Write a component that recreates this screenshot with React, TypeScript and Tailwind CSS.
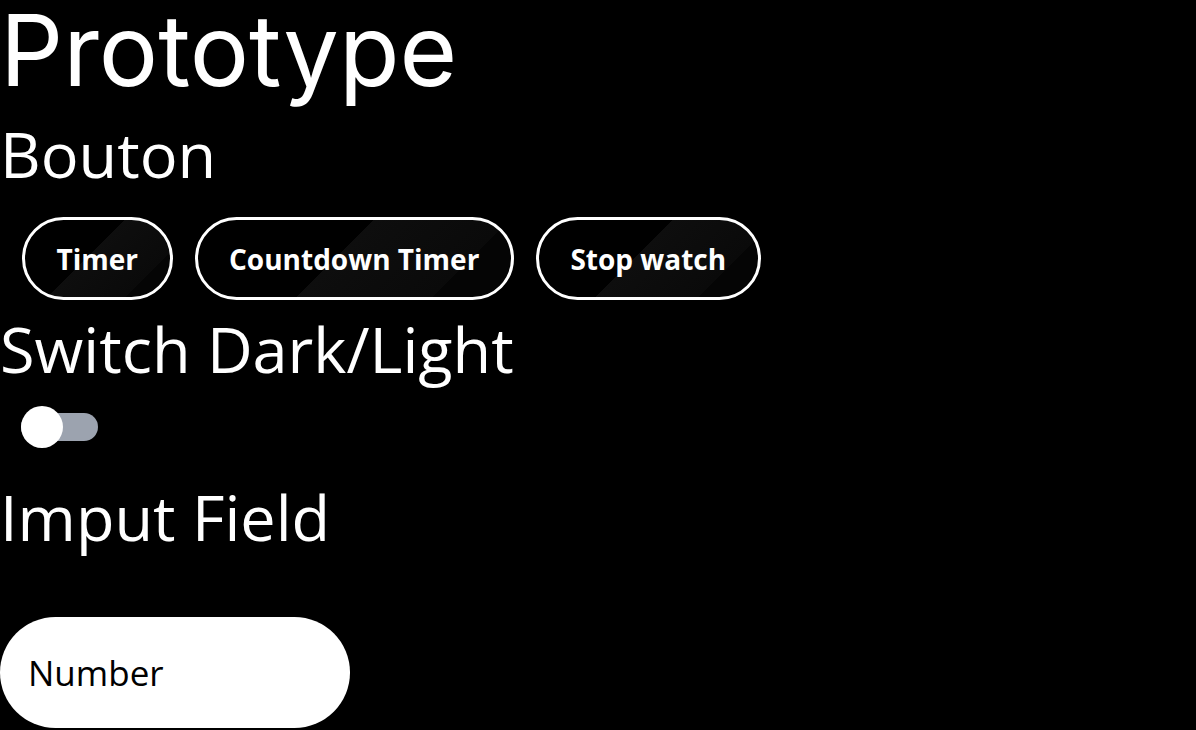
const buttons = ["Timer", "Countdown Timer", "Stop watch"];

const App = () => {
  return (
    <div className="min-h-screen bg-black text-white">
      <h1 className="font-['Inter',sans-serif] text-[99px] leading-[100px] font-normal">
        Prototype
      </h1>
      <div className="font-['Open_Sans',sans-serif]">
        <h2 className="mt-[14px] text-[63px] leading-[80px]">Bouton</h2>
        <div className="mt-[23px] flex gap-[22px] px-[22px]">
          {buttons.map(b => (
            <button
              key={b}
              className="h-[83px] rounded-full border-[3px] border-white bg-[linear-gradient(135deg,#000_45%,#0e0e0e_45%,#0a0a0a_80%,#050505_80%)] px-[31.5px] text-[28px] font-bold text-white"
            >
              {b}
            </button>
          ))}
        </div>
        <h2 className="mt-[9px] text-[63px] leading-[80px]">Switch Dark/Light</h2>
        <div className="pt-[17px] pb-[29px] px-[21px]">
          <div className="relative flex h-[42px] items-center">
            <div className="h-[28px] w-[77px] rounded-full bg-[#9ca3af]" />
            <span className="absolute left-0 top-0 h-[42px] w-[42px] rounded-full bg-white" />
          </div>
        </div>
        <h2 className="text-[63px] leading-[80px]">Imput Field</h2>
        <div className="pt-[60px]">
          <input
            type="text"
            placeholder="Number"
            className="h-[111px] w-[350px] rounded-full bg-white px-[28px] text-[35px] text-black placeholder:text-black outline-none"
          />
        </div>
      </div>
    </div>
  );
};

export default App;
